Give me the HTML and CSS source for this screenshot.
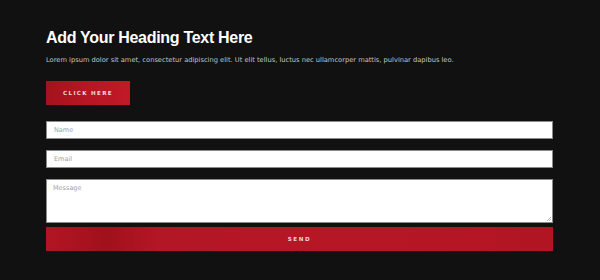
FILE: index.html
```html
<!DOCTYPE html>
<html>
<head>
<meta charset="utf-8">
<link rel="stylesheet" href="styles.css">
</head>
<body>
<section class="wrap">
  <h1 class="title">Add Your Heading Text Here</h1>
  <p class="lead">Lorem ipsum dolor sit amet, consectetur adipiscing elit. Ut elit tellus, luctus nec ullamcorper mattis, pulvinar dapibus leo.</p>
  <a class="btn" href="#">CLICK HERE</a>
  <form class="form">
    <input class="field" type="text" placeholder="Name">
    <input class="field" type="email" placeholder="Email">
    <textarea class="field area" placeholder="Message"></textarea>
    <button class="send" type="button">SEND</button>
  </form>
</section>
</body>
</html>
```
FILE: styles.css
```css
html, body {
  margin: 0;
  padding: 0;
  background: #111111;
  width: 600px;
  height: 280px;
  overflow: hidden;
}
.wrap {
  padding: 28px 47px 0 46px;
  display: flex;
  flex-direction: column;
  font-family: "DejaVu Sans", sans-serif;
}
.title {
  margin: 0;
  color: #ffffff;
  font-family: "Liberation Sans", Arial, sans-serif;
  font-size: 16px;
  line-height: 20px;
  font-weight: 700;
  letter-spacing: -0.3px;
}
.lead {
  margin: 6px 0 0;
  color: #c4c4c4;
  font-size: 6.7px;
  line-height: 12px;
}
.btn {
  margin-top: 15px;
  align-self: flex-start;
  width: 84px;
  height: 24px;
  display: flex;
  align-items: center;
  justify-content: center;
  background: linear-gradient(90deg, #a3121c 0%, #b81624 50%, #c11928 100%);
  color: #f4d5d9;
  font-size: 5.6px;
  font-weight: 700;
  letter-spacing: 1.3px;
  text-decoration: none;
}
.form {
  margin-top: 16px;
  display: flex;
  flex-direction: column;
}
.field {
  box-sizing: border-box;
  width: 507px;
  height: 18px;
  margin: 0 0 11px;
  padding: 0 7px;
  border: 1px solid #8a8a8a;
  border-radius: 0;
  background: #ffffff;
  font-family: "DejaVu Sans", sans-serif;
  font-size: 6.5px;
  color: #333;
  outline: none;
}
.field::placeholder {
  color: #a2a2a2;
}
.area {
  height: 44px;
  margin-bottom: 4px;
  padding: 4px 6px;
  resize: none;
  background-color: #ffffff;
  background-image: linear-gradient(135deg, transparent 0 55%, #b5b5b5 55% 62%, transparent 62% 75%, #b5b5b5 75% 82%, transparent 82%);
  background-size: 5px 5px;
  background-position: right 1px bottom 1px;
  background-repeat: no-repeat;
}
.send {
  width: 507px;
  height: 24px;
  border: 0;
  padding: 0;
  background: linear-gradient(90deg, #b21522 0%, #a0111b 12%, #b31624 22%, #b61725 60%, #b21522 100%);
  color: #f4d5d9;
  font-family: "DejaVu Sans", sans-serif;
  font-size: 5.6px;
  font-weight: 700;
  letter-spacing: 1.6px;
}
```
